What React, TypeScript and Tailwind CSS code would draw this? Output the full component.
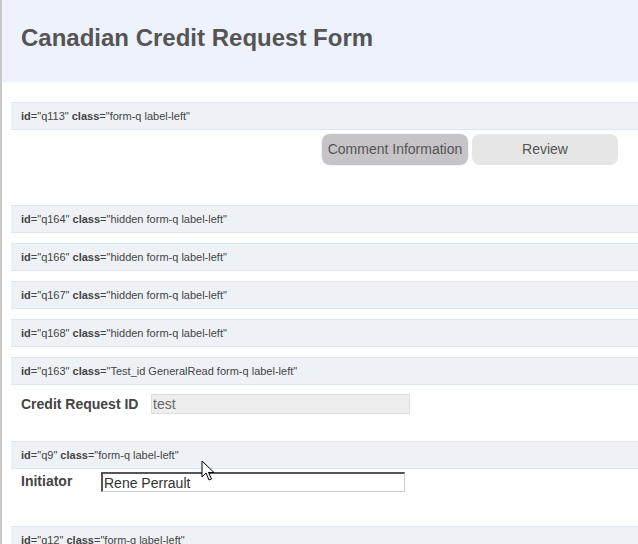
import React from "react";

function QBar({ id, cls }: { id: string; cls: string }) {
  return (
    <div className="h-[28px] flex items-center bg-[#eef2f7] border-y border-[#dce6f1] pl-[10px] text-[11px] text-[#444]">
      <span>
        <b>id</b>="{id}" <b>class</b>="{cls}"
      </span>
    </div>
  );
}

function Cursor() {
  return (
    <svg
      className="absolute left-[199px] top-[460px]"
      width="14"
      height="22"
      viewBox="0 0 14 22"
    >
      <path
        d="M1 1 L1 17 L5 13 L8 20 L10.5 19 L7.5 12.5 L13 12.5 Z"
        fill="#fff"
        stroke="#000"
        strokeWidth="1"
        strokeLinejoin="miter"
      />
    </svg>
  );
}

export default function App() {
  return (
    <div className="relative min-h-[544px] h-[544px] overflow-hidden border-l-2 border-[#c8c8c8] bg-white font-['Liberation_Sans',Arial,sans-serif]">
      {/* Header */}
      <div className="h-[82px] bg-[#eef2fd] pl-[19px] pt-[24px]">
        <h1 className="text-[24px] font-bold text-[#555] leading-[28px]">
          Canadian Credit Request Form
        </h1>
      </div>

      <div className="pl-[9px] pt-[20px]">
        <QBar id="q113" cls="form-q label-left" />

        {/* Tabs */}
        <div className="flex justify-end gap-[4px] pr-[20px] mt-[4px]">
          <button className="w-[146px] h-[31px] rounded-[8px] bg-[#c6c4c8] text-[14px] text-[#555] ring-1 ring-[#f2f2f2]">
            Comment Information
          </button>
          <button className="w-[146px] h-[31px] rounded-[8px] bg-[#e6e6e6] text-[14px] text-[#555]">
            Review
          </button>
        </div>

        <div className="mt-[40px] flex flex-col gap-[10px]">
          <QBar id="q164" cls="hidden form-q label-left" />
          <QBar id="q166" cls="hidden form-q label-left" />
          <QBar id="q167" cls="hidden form-q label-left" />
          <QBar id="q168" cls="hidden form-q label-left" />
          <QBar id="q163" cls="Test_id GeneralRead form-q label-left" />
        </div>

        {/* Credit Request ID */}
        <div className="flex items-center mt-[9px] pl-[10px] h-[20px]">
          <label className="w-[130px] text-[14px] font-bold text-[#444]">
            Credit Request ID
          </label>
          <div className="w-[259px] h-[20px] bg-[#eeeeee] border border-[#dddddd] pl-[1px] text-[14px] leading-[18px] text-[#666]">
            test
          </div>
        </div>

        <div className="mt-[27px]">
          <QBar id="q9" cls="form-q label-left" />
        </div>

        {/* Initiator */}
        <div className="flex items-start mt-[3px] pl-[10px]">
          <label className="w-[80px] text-[14px] font-bold text-[#444] leading-[18px]">
            Initiator
          </label>
          <div className="w-[304px] h-[20px] bg-white border-2 border-t-[#555] border-l-[#555] border-r-[#ccc] border-b-[#ccc] border-r border-b pl-[1px] text-[14px] leading-[18px] text-[#333]">
            Rene Perrault
          </div>
        </div>

        <div className="mt-[34px]">
          <QBar id="q12" cls="form-q label-left" />
        </div>
      </div>

      <Cursor />
    </div>
  );
}
